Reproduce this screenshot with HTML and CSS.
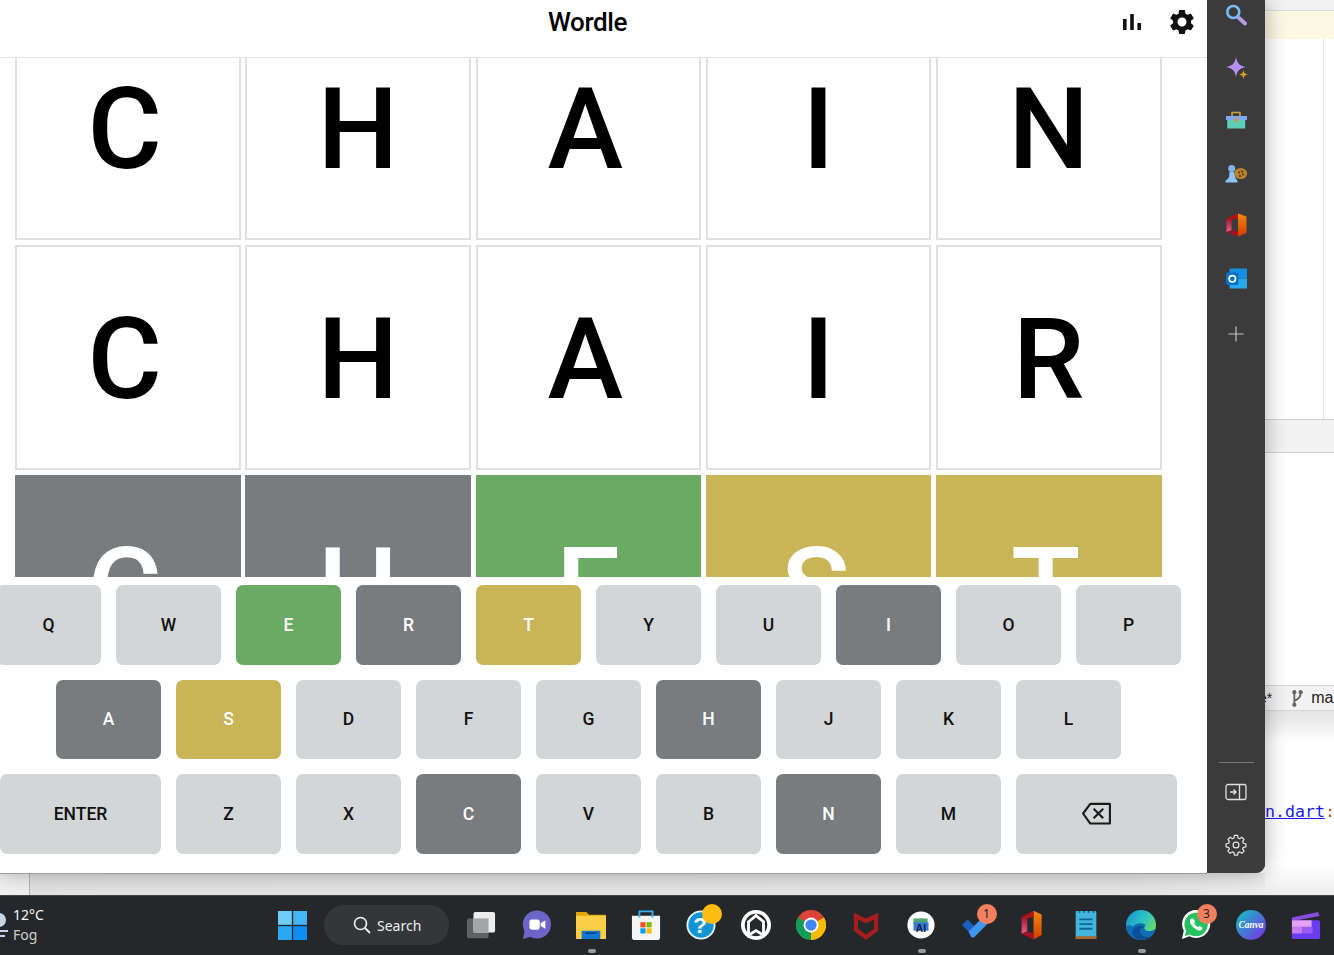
FILE: index.html
```html
<!DOCTYPE html>
<html lang="en">
<head>
<meta charset="utf-8">
<title>Wordle</title>
<link rel="stylesheet" href="styles.css">
</head>
<body>
<div class="screen">
  <div class="workspace">
    <div class="left">
      <div class="window">
        <main class="app">
          <header class="topbar">
            <h1 class="title">Wordle</h1>
            <svg class="ico-stats" viewBox="0 0 24 24"><path d="M3 9h3.6v11H3zM10.2 4h3.6v16h-3.6zM17.4 13H21v7h-3.6z"/></svg>
            <svg class="ico-gear" viewBox="0 0 24 24"><path d="M19.14 12.94c.04-.3.06-.61.06-.94 0-.32-.02-.64-.07-.94l2.03-1.58a.49.49 0 0 0 .12-.61l-1.92-3.32a.49.49 0 0 0-.59-.22l-2.39.96c-.5-.38-1.03-.7-1.62-.94l-.36-2.54a.48.48 0 0 0-.48-.41h-3.84c-.24 0-.43.17-.47.41l-.36 2.54c-.59.24-1.13.57-1.62.94l-2.39-.96a.49.49 0 0 0-.59.22L2.74 8.87c-.12.21-.08.47.12.61l2.03 1.58c-.05.3-.09.63-.09.94s.02.64.07.94l-2.03 1.58a.49.49 0 0 0-.12.61l1.92 3.32c.12.22.37.29.59.22l2.39-.96c.5.38 1.03.7 1.62.94l.36 2.54c.05.24.24.41.48.41h3.84c.24 0 .44-.17.47-.41l.36-2.54c.59-.24 1.13-.56 1.62-.94l2.39.96c.22.08.47 0 .59-.22l1.92-3.32c.12-.22.07-.47-.12-.61l-2.01-1.58zM12 15.6A3.6 3.6 0 1 1 12 8.4a3.6 3.6 0 0 1 0 7.2z"/></svg>
          </header>
          <section class="board-view">
            <div class="board">
              <div class="tile nudge">C</div><div class="tile">H</div><div class="tile nudge">A</div><div class="tile">I</div><div class="tile">N</div>
              <div class="tile nudge">C</div><div class="tile">H</div><div class="tile nudge">A</div><div class="tile">I</div><div class="tile">R</div>
              <div class="tile absent nudge">C</div><div class="tile absent">H</div><div class="tile correct">E</div><div class="tile present nudge">S</div><div class="tile present nudge">T</div>
            </div>
          </section>
          <section class="keyboard">
            <div class="key-row">
              <div class="key">Q</div><div class="key">W</div><div class="key correct">E</div><div class="key absent">R</div><div class="key present">T</div><div class="key">Y</div><div class="key">U</div><div class="key absent">I</div><div class="key">O</div><div class="key">P</div>
            </div>
            <div class="key-row">
              <div class="key absent">A</div><div class="key present">S</div><div class="key">D</div><div class="key">F</div><div class="key">G</div><div class="key absent">H</div><div class="key">J</div><div class="key">K</div><div class="key">L</div>
            </div>
            <div class="key-row">
              <div class="key wide">ENTER</div><div class="key">Z</div><div class="key">X</div><div class="key absent">C</div><div class="key">V</div><div class="key">B</div><div class="key absent">N</div><div class="key">M</div>
              <div class="key wide"><svg class="ico-back" viewBox="0 0 32 24"><path d="M9.500 2H30V22.500H9.500L2 12z" fill="none" stroke="#1a1a1a" stroke-width="2.200" stroke-linejoin="round"/><path d="M13 7l10 10M23 7L13 17" fill="none" stroke="#1a1a1a" stroke-width="2.200"/></svg></div>
            </div>
          </section>
        </main>
        <aside class="sidebar">
          <div class="side-top">
            <svg class="side-ico" viewBox="0 0 24 24"><path d="M15 15l6 5.500" stroke="#b49be8" stroke-width="4" stroke-linecap="round"/><circle cx="9.300" cy="9" r="6" fill="none" stroke="#7cbcf5" stroke-width="2.600"/></svg>
            <svg class="side-ico" viewBox="0 0 24 24"><path d="M12 1c1 6 3.500 9 10 10c-6.500 1-9 4-10 10c-1-6-3.500-9-10-10c6.500-1 9-4 10-10z" fill="#b690f5"/><path d="M19.500 14c.5 3 1.500 4 4.500 4.500c-3 .5-4 1.500-4.500 4.500c-.5-3-1.500-4-4.500-4.500c3-.5 4-1.500 4.500-4.500z" fill="#d8a020"/></svg>
            <svg class="side-ico" viewBox="0 0 24 24"><path d="M8 8V4.500h8V8" fill="none" stroke="#c9a040" stroke-width="1.600"/><path d="M3.200 12h18v8.500h-18z" fill="#5fcdb8"/><path d="M2 8h21v4H2z" fill="#7fa8f2"/><rect x="10.800" y="10" width="3" height="4" rx="1" fill="#d49a2a"/></svg>
            <svg class="side-ico" viewBox="0 0 24 24"><ellipse cx="16.700" cy="12.500" rx="6.500" ry="5.500" fill="#b9832a"/><circle cx="7.700" cy="7.500" r="3.500" fill="#7fb4ee"/><path d="M5.500 11h4.500l1.200 5.500 2.300 3.500v1.500H1.500V20l3.500-3.500z" fill="#8ec3f5"/><circle cx="15" cy="11.500" r="1" fill="#4a3012"/><circle cx="18" cy="10.500" r="1" fill="#4a3012"/><circle cx="19" cy="13.500" r="1" fill="#4a3012"/><circle cx="16" cy="15" r="1" fill="#4a3012"/></svg>
            <svg class="side-ico" viewBox="0 0 24 24"><defs><linearGradient id="of" x1="0" y1="0" x2="0" y2="1"><stop offset="0" stop-color="#f28a10"/><stop offset="1" stop-color="#d83b01"/></linearGradient><linearGradient id="op" x1="0" y1="0" x2="0" y2="1"><stop offset="0" stop-color="#a8152f"/><stop offset="1" stop-color="#e8608c"/></linearGradient></defs><path d="M14 .5l8.500 3V20L14 23.500z" fill="url(#of)"/><path d="M14 .5L2.500 5.500V8L8 6.500l6-1z" fill="#b31217"/><path d="M2.500 6L7.500 6.500V17l-5 2z" fill="url(#op)"/><path d="M2.500 19l5-1.500 6.500 1v5z" fill="#a80f20"/></svg>
            <svg class="side-ico" viewBox="0 0 24 24"><path d="M5.500 2.500h17.500v10H5.500z" fill="#1490df"/><path d="M5.500 12.500h17.500v10H5.500z" fill="#28a8ea"/><rect x="2" y="6.500" width="12.500" height="12.500" rx="1.500" fill="#0a6fc8"/><circle cx="8.300" cy="12.800" r="3.200" fill="none" stroke="#fff" stroke-width="1.700"/></svg>
            <svg class="side-plus" viewBox="0 0 16 16"><path d="M8 .5v15M.5 8h15" stroke="#c4c4c4" stroke-width="1.200"/></svg>
          </div>
          <div class="side-bottom">
            <div class="side-rule"></div>
            <svg class="side-tool" viewBox="0 0 22 18"><rect x="1" y="1.500" width="20" height="15" rx="2" fill="none" stroke="#e0e0e0" stroke-width="1.300"/><path d="M14.500 1.500v15" stroke="#e0e0e0" stroke-width="1.300"/><path d="M5 9h6M8.500 6.500L11 9l-2.500 2.500" fill="none" stroke="#e0e0e0" stroke-width="1.400"/></svg>
            <svg class="side-tool" viewBox="0 0 24 24"><path d="M10.300 1.500h3.400l.5 2.800 1.800.8 2.400-1.600 2.400 2.400-1.600 2.400.8 1.800 2.800.5v3.400l-2.800.5-.8 1.800 1.600 2.400-2.400 2.400-2.400-1.600-1.800.8-.5 2.800h-3.400l-.5-2.800-1.800-.8-2.400 1.600-2.400-2.400 1.600-2.400-.8-1.800-2.800-.5v-3.400l2.800-.5.8-1.800-1.600-2.400 2.400-2.400 2.400 1.600 1.800-.8z" fill="none" stroke="#e8e8e8" stroke-width="1.300" stroke-linejoin="round"/><circle cx="12" cy="12" r="3.200" fill="none" stroke="#e8e8e8" stroke-width="1.300"/></svg>
          </div>
        </aside>
      </div>
      <div class="under-strip"><div class="under-line"></div></div>
    </div>
    <div class="editor">
      <div class="ed-tabs"></div>
      <div class="ed-warning"></div>
      <div class="ed-body"><div class="ed-margin"></div></div>
      <div class="ed-panelbar"></div>
      <div class="ed-panel"></div>
      <div class="ed-status"><span class="dirty">e*</span><svg class="ico-branch" viewBox="0 0 12 18"><path d="M3 3v12M3 11c4-1 6-3 6-8" fill="none" stroke="#666" stroke-width="1.800"/><circle cx="3" cy="3" r="2" fill="#666"/><circle cx="9" cy="3" r="2" fill="#666"/><circle cx="3" cy="15" r="2" fill="#666"/></svg><span class="branch">main</span></div>
      <div class="ed-console"><a class="link">n.dart</a><span class="colon">:</span></div>
    </div>
  </div>
  <footer class="taskbar">
    <div class="weather">
      <svg class="ico-weather" viewBox="0 0 12 26"><circle cx="-1" cy="8" r="7" fill="#c5d5e5"/><path d="M-2 19h10M-2 24h7" stroke="#c5d5e5" stroke-width="2"/></svg>
      <div class="weather-text"><div class="temp">12°C</div><div class="cond">Fog</div></div>
    </div>
    <svg class="tb-start" viewBox="0 0 30 30"><rect x="0" y="0" width="14.300" height="14.300" fill="#6fcdfb"/><rect x="15.700" y="0" width="14.300" height="14.300" fill="#45b5f5"/><rect x="0" y="15.700" width="14.300" height="14.300" fill="#28a8f5"/><rect x="15.700" y="15.700" width="14.300" height="14.300" fill="#0f8df0"/></svg>
    <div class="searchbox"><svg class="ico-search" viewBox="0 0 18 18"><circle cx="7.500" cy="7.500" r="6" fill="none" stroke="#f2f2f2" stroke-width="1.600"/><path d="M12 12l5 5" stroke="#f2f2f2" stroke-width="1.800"/></svg><span>Search</span></div>
    <div class="tb-item"><svg class="tb-ico" viewBox="0 0 32 32"><rect x="1" y="9" width="23" height="21" rx="2" fill="#5f6163"/><rect x="8" y="2" width="23" height="22" rx="2" fill="#ececec"/><rect x="8" y="9" width="16" height="15" fill="#a4a5a6"/></svg></div>
    <div class="tb-item"><svg class="tb-ico" viewBox="0 0 32 32"><circle cx="17" cy="15.500" r="15" fill="#6c66c9"/><path d="M4 22l-2 9 10-3z" fill="#6c66c9"/><rect x="9" y="10" width="11" height="11" rx="2.500" fill="#fff"/><path d="M21 14l5-3v9l-5-3z" fill="#fff"/></svg></div>
    <div class="tb-item running"><svg class="tb-ico" viewBox="0 0 32 32"><path d="M0 2h11l3 3h18v25H0z" fill="#e5a50a"/><path d="M0 6h32v24a1 1 0 0 1-1 1H1a1 1 0 0 1-1-1z" fill="#fdcf49"/><rect x="6" y="22" width="20" height="9" rx="1" fill="#0f78d4"/><rect x="10" y="24" width="12" height="1.500" fill="#063a6b"/></svg></div>
    <div class="tb-item"><svg class="tb-ico" viewBox="0 0 32 32"><path d="M1 6h30v23a3 3 0 0 1-3 3H4a3 3 0 0 1-3-3z" fill="#f5f5f5"/><path d="M9 8V1.500h14V8" fill="none" stroke="#35b0e8" stroke-width="2"/><rect x="10" y="13" width="5.500" height="5.500" fill="#f25022"/><rect x="16.500" y="13" width="5.500" height="5.500" fill="#7fba00"/><rect x="10" y="19.500" width="5.500" height="5.500" fill="#00a4ef"/><rect x="16.500" y="19.500" width="5.500" height="5.500" fill="#ffb900"/></svg></div>
    <div class="tb-item"><svg class="tb-ico" viewBox="0 0 32 32"><circle cx="16" cy="16" r="14.500" fill="#1294d4" stroke="#e8f3fa" stroke-width="2"/><text class="tb-q" x="15" y="24" text-anchor="middle">?</text></svg><span class="dot-yellow"></span></div>
    <div class="tb-item"><svg class="tb-ico" viewBox="0 0 32 32"><circle cx="16" cy="16" r="16" fill="#fff"/><circle cx="16" cy="16" r="12" fill="#26292b"/><path d="M8 12.500l8-6.500 8 6.500V27l-8-5-8 5z" fill="none" stroke="#fff" stroke-width="3"/></svg></div>
    <div class="tb-item"><svg class="tb-ico" viewBox="0 0 32 32"><circle cx="16" cy="16" r="16" fill="#db4437"/><path d="M16 16L2.100 8A16 16 0 0 0 16 32z" fill="#0f9d58"/><path d="M16 16L29.900 8A16 16 0 0 1 16 32z" fill="#fbbc05"/><circle cx="16" cy="16" r="8" fill="#fff"/><circle cx="16" cy="16" r="6" fill="#4285f4"/></svg></div>
    <div class="tb-item"><svg class="tb-ico" viewBox="0 0 32 32"><path d="M3 3l13 6 13-6v19l-13 10-13-10z" fill="#a81c1c"/><path d="M7.500 10l8.500 4.500 8.500-4.500v10l-8.500 6.500-8.500-6.500z" fill="#26292b"/></svg></div>
    <div class="tb-item running"><svg class="tb-ico" viewBox="0 0 32 32"><circle cx="16" cy="16" r="14.500" fill="#fff"/><path d="M8 9h15v6H8z" fill="#4fa36c"/><path d="M8 13h16v9H8z" fill="#3a78d8"/><text class="tb-ai" x="16" y="23.500" text-anchor="middle">AI</text></svg></div>
    <div class="tb-item"><svg class="tb-ico" viewBox="0 0 32 32"><path d="M1 16l6-6 7 7-6 6z" fill="#1b5fc0"/><path d="M8 23L24 7l6 6-16 16a3 3 0 0 1-3 0z" fill="#3f96ee"/></svg><span class="badge">1</span></div>
    <div class="tb-item"><svg class="tb-ico" viewBox="0 0 24 24"><defs><linearGradient id="of2" x1="0" y1="0" x2="0" y2="1"><stop offset="0" stop-color="#f28a10"/><stop offset="1" stop-color="#d83b01"/></linearGradient><linearGradient id="op2" x1="0" y1="0" x2="0" y2="1"><stop offset="0" stop-color="#a8152f"/><stop offset="1" stop-color="#e8608c"/></linearGradient></defs><path d="M14 .5l6.500 3V20L14 23.500z" fill="url(#of2)"/><path d="M14 .5L4.500 5.500V8L9 6.500l5-1z" fill="#b31217"/><path d="M4.500 6L9 6.500V17l-4.500 2z" fill="url(#op2)"/><path d="M4.500 19L9 17.500l5 1v5z" fill="#a80f20"/></svg></div>
    <div class="tb-item"><svg class="tb-ico" viewBox="0 0 32 32"><rect x="5" y="1" width="22" height="30" rx="1" fill="#43b4dc"/><rect x="5" y="28" width="22" height="3" fill="#a5672b"/><path d="M9 10h14M9 15h14M9 20h14" stroke="#0c6a91" stroke-width="2"/><path d="M8 2h2M13 2h2M18 2h2M23 2h2" stroke="#0c6a91" stroke-width="2"/></svg></div>
    <div class="tb-item running"><svg class="tb-ico" viewBox="0 0 32 32"><defs><linearGradient id="ed" x1="0" y1="0" x2="1" y2=".6"><stop offset="0" stop-color="#1590d8"/><stop offset=".6" stop-color="#2fc6c0"/><stop offset="1" stop-color="#6fdc5a"/></linearGradient></defs><circle cx="16" cy="16" r="16" fill="url(#ed)"/><path d="M32 17c0 5-6 6-10 5-3-1-3-4-1-6-4-3-11-2-14 2-2-2-3-2-7-1 0 8 7 15 16 15 9 0 16-7 16-15z" fill="#0f6cb5"/><path d="M16 32C8 31 5 25 8 20c2-3 8-4 12-2-4 0-6 3-5 6 1 4 7 6 12 4-3 3-7 4-11 4z" fill="#0d4f95"/></svg></div>
    <div class="tb-item"><svg class="tb-ico" viewBox="0 0 32 32"><path d="M1 31l2-9a15 15 0 1 1 6 6z" fill="#fff"/><path d="M4 28l1.500-6a12.500 12.500 0 1 1 4 4z" fill="#25c15f"/><path d="M11 9c-2 1-2 4 0 7s6 6 9 6c2 0 3-2 3-3l-3-2-2 1c-2-1-3-3-4-4l1-2-2-3z" fill="#fff"/></svg><span class="badge">3</span></div>
    <div class="tb-item"><svg class="tb-ico" viewBox="0 0 32 32"><defs><linearGradient id="cv" x1="0" y1="0" x2="1" y2="1"><stop offset="0" stop-color="#0fc6c2"/><stop offset="1" stop-color="#7d2ae8"/></linearGradient></defs><circle cx="16" cy="16" r="16" fill="url(#cv)"/><text class="tb-canva" x="16" y="19.500" text-anchor="middle">Canva</text></svg></div>
    <div class="tb-item"><svg class="tb-ico" viewBox="0 0 32 32"><path d="M1 8l28-6 1.500 4.500L1 12z" fill="#8a4be0"/><rect x="1" y="11" width="30" height="20" rx="2" fill="#6a3cf0"/><rect x="1" y="11" width="21" height="7" fill="#e8a2f5"/><rect x="1" y="18" width="11" height="7" fill="#c77cf0"/><rect x="12" y="18" width="11" height="7" fill="#9a5cf0"/></svg></div>
  </footer>
</div>
</body>
</html>
```

FILE: styles.css
```css
* { box-sizing: border-box; }
html, body { margin: 0; height: 100%; overflow: hidden; }
body { font-family: "Roboto", "Liberation Sans", sans-serif; background: #fff; }
.screen { width: 1334px; height: 955px; display: flex; flex-direction: column; overflow: hidden; }

.workspace { flex: 0 0 895px; display: flex; overflow: hidden; }
.left { flex: 0 0 1265px; display: flex; flex-direction: column; position: relative; z-index: 1; }
.window { flex: 0 0 873px; display: flex; border-bottom-right-radius: 9px; background: #3b3b3b; box-shadow: 0 0 22px rgba(0,0,0,.32); position: relative; z-index: 1; }
.under-strip { flex: 1; background: linear-gradient(90deg, #e2e2e2, #e6e6e6 90%, #ededed); }
.under-line { width: 30px; height: 100%; border-right: 1px solid #b5b5b5; background: #f0f0f0; }

.app { flex: 0 0 1207px; background: #fff; display: flex; flex-direction: column; min-width: 0; box-shadow: 0 1px 0 #9a9a9a; }
.topbar { flex: 0 0 58px; display: flex; align-items: center; justify-content: center; position: relative; border-bottom: 1px solid #e3e3e3; padding-bottom: 14px; background: #fff; }
.title { margin: 0; font-size: 26px; font-weight: 500; letter-spacing: -0.4px; color: #000; position: relative; left: -16px; }
.ico-stats { position: absolute; left: 1120px; top: 10px; width: 24px; height: 24px; fill: #111; }
.ico-gear { position: absolute; left: 1167px; top: 7px; width: 30px; height: 30px; fill: #111; }

.board-view { flex: 0 0 519px; overflow: hidden; }
.board { display: grid; grid-template-columns: repeat(5, 225.5px); grid-auto-rows: 225.5px; gap: 4.75px; margin: -43.500px 0 0 15px; }
.tile { display: flex; align-items: center; justify-content: center; border: 2px solid #e0e0e0; padding-top: 3px; font-size: 114px; font-weight: 550; color: #000; line-height: 1; }
.tile.nudge { padding-right: 6px; }
.tile.absent { background: #787c7e; border-color: #787c7e; color: #fff; }
.tile.correct { background: #6aaa64; border-color: #6aaa64; color: #fff; }
.tile.present { background: #c9b458; border-color: #c9b458; color: #fff; }

.keyboard { flex: 1; display: flex; flex-direction: column; gap: 15px; padding-top: 8px; width: 1177px; }
.key-row { display: flex; justify-content: center; gap: 15px; height: 79.600px; }
.key { flex: 0 0 105px; display: flex; align-items: center; justify-content: center; background: #d2d6d6; border-radius: 7px; font-size: 17.500px; font-weight: 500; color: #111; }
.key.wide { flex: 0 0 161px; }
.key.absent { background: #787c7e; color: #fff; }
.key.correct { background: #6aaa64; color: #fff; }
.key.present { background: #c9b458; color: #fff; }
.ico-back { width: 31px; height: 23px; }

.sidebar { flex: 0 0 58px; background: #3b3b3b; border-bottom-right-radius: 9px; display: flex; flex-direction: column; justify-content: space-between; align-items: center; padding: 3px 0 17.500px; }
.side-top { display: flex; flex-direction: column; align-items: center; gap: 28.500px; }
.side-ico { width: 24px; height: 24px; display: block; }
.side-plus { width: 16px; height: 16px; display: block; margin-top: 8px; }
.side-bottom { display: flex; flex-direction: column; align-items: center; }
.side-rule { width: 35px; height: 1px; background: #777; margin-bottom: 18px; }
.side-tool { width: 22px; height: 22px; display: block; }
.side-tool + .side-tool { margin-top: 30.500px; }

.editor { flex: 1; min-width: 0; display: flex; flex-direction: column; background: #fff; overflow: hidden; }
.ed-tabs { flex: 0 0 11px; background: #f2f2f2; border-bottom: 1px solid #dcdcdc; }
.ed-warning { flex: 0 0 28px; background: #fdf8e3; }
.ed-body { flex: 0 0 380px; display: flex; justify-content: flex-end; background: #fff; }
.ed-margin { width: 11px; border-left: 1px solid #e3e3e3; }
.ed-panelbar { flex: 0 0 34px; background: #f2f2f2; border-top: 1px solid #d0d0d0; border-bottom: 1px solid #d0d0d0; }
.ed-panel { flex: 0 0 232px; background: #fff; }
.ed-status { flex: 0 0 26px; background: #f2f2f2; border-top: 1px solid #d8d8d8; border-bottom: 1px solid #d8d8d8; display: flex; align-items: center; font-size: 16px; color: #222; white-space: nowrap; font-family: "Liberation Sans", sans-serif; }
.dirty { margin-left: -6px; font-size: 14px; }
.ico-branch { flex: none; width: 13px; height: 19px; margin-left: 19px; }
.branch { margin-left: 7px; }
.ed-console { flex: 1; padding-top: 91px; font: 16.600px "DejaVu Sans Mono", "Liberation Mono", monospace; white-space: nowrap; background: linear-gradient(#e4e4e4, #fff 32px, #fff calc(100% - 30px), #ececec); }
.link { color: #1a1aee; text-decoration: underline; }
.colon { color: #b0561a; }

.taskbar { flex: 0 0 60px; background: #25282a; border-top: 1px solid #444; padding-bottom: 1px; display: flex; align-items: center; }
.weather { flex: 0 0 278px; display: flex; align-items: center; color: #f2f2f2; font-size: 14px; }
.ico-weather { width: 12px; height: 26px; overflow: hidden; }
.weather-text { margin-left: 1px; line-height: 20px; font-family: "Noto Sans", sans-serif; }
.temp { color: #f5f5f5; }
.cond { color: #cfcfcf; }
.tb-start { flex: 0 0 29px; height: 29px; margin-right: 17px; }
.searchbox { flex: 0 0 125px; height: 40px; border-radius: 20px; background: #33373a; display: flex; align-items: center; padding-left: 29px; color: #eee; font: 14px "Noto Sans", sans-serif; margin-right: 4.500px; }
.ico-search { width: 18px; height: 18px; margin-right: 6px; }
.tb-item { flex: 0 0 55px; height: 58px; display: flex; align-items: center; justify-content: center; position: relative; }
.tb-ico { width: 30px; height: 30px; display: block; }
.tb-item.running::after { content: ""; position: absolute; left: 24px; bottom: 1px; width: 8px; height: 4px; border-radius: 2px; background: #9a9a9a; }
.tb-q { font: bold 24px "Liberation Sans", sans-serif; fill: #fff; }
.tb-ai { font: bold 11px "Liberation Sans", sans-serif; fill: #102040; }
.tb-canva { font: italic bold 10px "Liberation Serif", serif; fill: #fff; }
.dot-yellow { position: absolute; left: 28px; top: 8px; width: 20px; height: 20px; border-radius: 50%; background: #fdbd10; }
.badge { position: absolute; left: 28px; top: 8px; width: 20px; height: 20px; border-radius: 50%; background: #f2805f; color: #222; font: 12px/20px "Noto Sans", sans-serif; text-align: center; }
```
